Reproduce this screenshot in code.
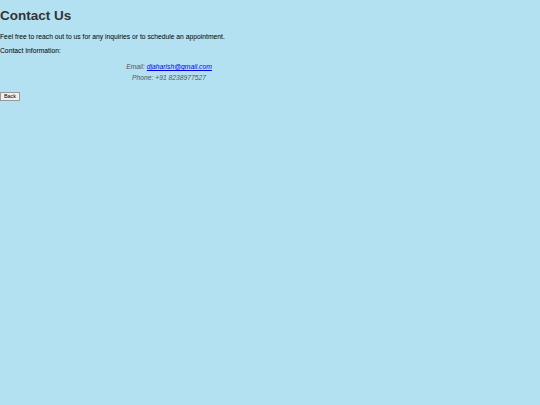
export default function App() {
  return (
    <div className="min-h-[405px] w-full bg-[#b3e1f2] font-['Liberation_Sans',Arial,sans-serif] text-black">
      <h1 className="pt-[8px] text-[13.5px] font-bold leading-[16px] text-[#333333]">Contact Us</h1>
      <p className="mt-[9px] text-[6.75px] leading-[8px]">
        Feel free to reach out to us for any inquiries or to schedule an appointment.
      </p>
      <p className="mt-[6px] text-[6.75px] leading-[8px]">Contact Information:</p>
      <div className="mt-[6px] w-[338px] text-center text-[6.75px] italic leading-[11px] text-[#555555]">
        <p>
          Email:{" "}
          <a href="#" className="text-[#0000ee] underline">
            djaharish@gmail.com
          </a>
        </p>
        <p>Phone: +91 8238977527</p>
      </div>
      <button className="mt-[9px] block h-[9px] w-[20px] border border-[#999] bg-[#f0f0f0] text-[5.5px] leading-[7px]">
        Back
      </button>
    </div>
  );
}
